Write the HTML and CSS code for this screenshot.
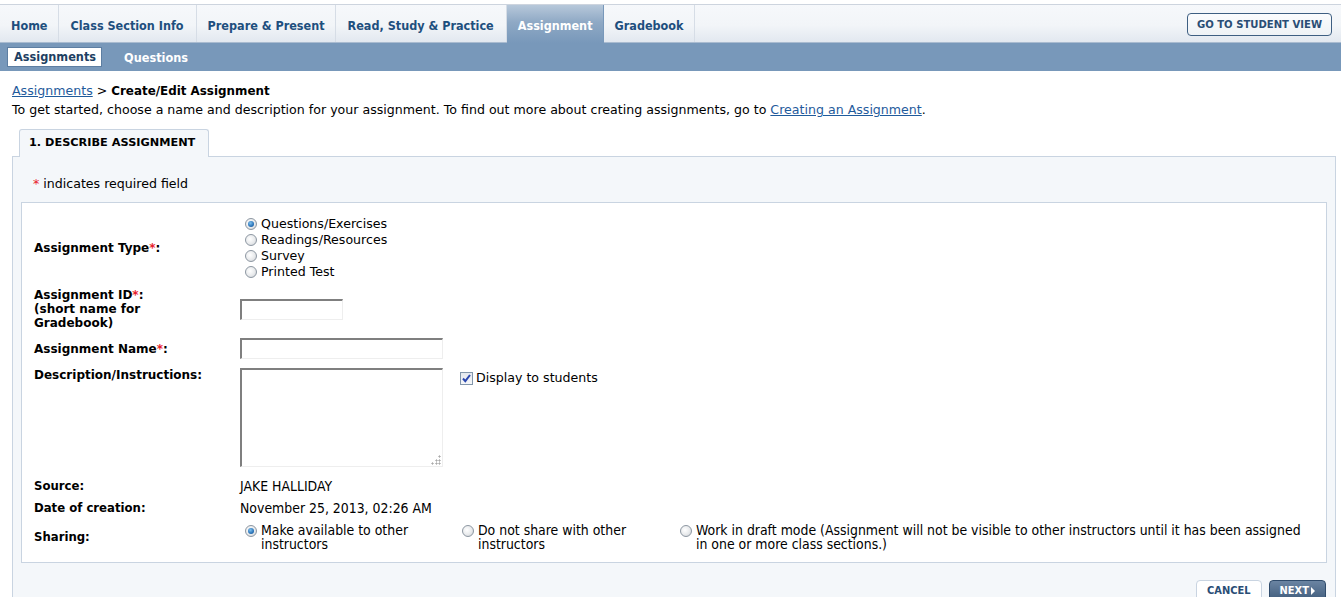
FILE: index.html
```html
<!DOCTYPE html>
<html>
<head>
<meta charset="utf-8">
<title>Create/Edit Assignment</title>
<link rel="stylesheet" href="styles.css">
</head>
<body>
<header class="topnav">
  <ul class="tabs">
    <li class="tab">Home</li>
    <li class="tab">Class Section Info</li>
    <li class="tab">Prepare &amp; Present</li>
    <li class="tab">Read, Study &amp; Practice</li>
    <li class="tab active">Assignment</li>
    <li class="tab">Gradebook</li>
  </ul>
  <button class="student-view">GO TO STUDENT VIEW</button>
</header>
<nav class="subnav">
  <span class="sub active">Assignments</span>
  <span class="sub">Questions</span>
</nav>
<main class="content">
  <div class="crumbs"><a href="#">Assignments</a> &gt; <b>Create/Edit Assignment</b></div>
  <p class="intro">To get started, choose a name and description for your assignment. To find out more about creating assignments, go to <a href="#">Creating an Assignment</a>.</p>
  <div class="steptab">1. DESCRIBE ASSIGNMENT</div>
  <section class="panel">
    <p class="req"><span class="star">*</span> indicates required field</p>
    <div class="formbox">
      <div class="row r-type">
        <div class="label">Assignment Type<span class="star">*</span>:</div>
        <div class="field radios">
          <label class="opt"><span class="radio on"></span>Questions/Exercises</label>
          <label class="opt"><span class="radio"></span>Readings/Resources</label>
          <label class="opt"><span class="radio"></span>Survey</label>
          <label class="opt"><span class="radio"></span>Printed Test</label>
        </div>
      </div>
      <div class="row r-id">
        <div class="label small">Assignment ID<span class="star">*</span>:<br>(short name for<br>Gradebook)</div>
        <div class="field"><span class="input short"></span></div>
      </div>
      <div class="row r-name">
        <div class="label">Assignment Name<span class="star">*</span>:</div>
        <div class="field"><span class="input long"></span></div>
      </div>
      <div class="row r-desc">
        <div class="label">Description/Instructions:</div>
        <div class="field desc">
          <span class="textarea"></span>
          <label class="check"><span class="checkbox"><svg width="11" height="11" viewBox="0 0 11 11"><path d="M2 5.5 L4.3 8.2 L9 2" fill="none" stroke="#2a46b0" stroke-width="2"/></svg></span>Display to students</label>
        </div>
      </div>
      <div class="row r-src">
        <div class="label cond">Source:</div>
        <div class="field cond">JAKE HALLIDAY</div>
      </div>
      <div class="row r-date">
        <div class="label cond">Date of creation:</div>
        <div class="field cond">November 25, 2013, 02:26 AM</div>
      </div>
      <div class="row r-share">
        <div class="label cond">Sharing:</div>
        <div class="field share cond">
          <label class="sopt s1"><span class="radio on"></span><span>Make available to other instructors</span></label>
          <label class="sopt s2"><span class="radio"></span><span>Do not share with other instructors</span></label>
          <label class="sopt s3"><span class="radio"></span><span>Work in draft mode (Assignment will not be visible to other instructors until it has been assigned in one or more class sections.)</span></label>
        </div>
      </div>
    </div>
    <div class="actions">
      <button class="btn cancel">CANCEL</button>
      <button class="btn next">NEXT<span class="tri"></span></button>
    </div>
  </section>
</main>
</body>
</html>
```

FILE: styles.css
```css
* { box-sizing: border-box; }
html, body { margin: 0; padding: 0; background: #fff; }
body {
  font-family: "DejaVu Sans", Verdana, sans-serif;
  font-size: 12.6px;
  color: #000;
}

/* top navigation */
.topnav {
  margin-top: 4px;
  height: 39px;
  border-top: 1px solid #cdd4de;
  border-bottom: 1px solid #a9bbd0;
  background: linear-gradient(#f6f8fb 0%, #f2f5f8 55%, #e2e8f0 100%);
  display: flex;
  justify-content: space-between;
  align-items: stretch;
}
.tabs { list-style: none; margin: 0; padding: 0; display: flex; }
.tab {
  font-family: "DejaVu Sans Condensed", Tahoma, sans-serif;
  font-weight: bold;
  font-size: 12.5px;
  color: #1e4f7e;
  display: flex;
  align-items: center;
  padding: 3px 10px 0 11px;
  border-right: 1px solid #d6dde6;
}
.tab:nth-child(2) { padding-left: 12px; padding-right: 12px; }
.tab:nth-child(4) { padding-left: 12px; padding-right: 12px; }
.tab.active {
  color: #fff;
  background: linear-gradient(#b7c8da 0%, #8fa9c5 45%, #7898ba 100%);
  border-right-color: #7898ba;
  margin-bottom: -1px;
}
.student-view {
  align-self: center;
  margin-right: 9px;
  margin-top: 1px;
  height: 23px;
  padding: 0 9px;
  border: 1px solid #3e5f82;
  border-radius: 4px;
  background: linear-gradient(#fbfcfd, #eef2f6);
  color: #2a4d75;
  font-family: "DejaVu Sans Condensed", Tahoma, sans-serif;
  font-weight: bold;
  font-size: 11.2px;
}

.subnav {
  height: 28px;
  background: #7898ba;
  display: flex;
  align-items: center;
  padding-left: 7px;
  gap: 22px;
}
.sub {
  font-family: "DejaVu Sans Condensed", Tahoma, sans-serif;
  font-weight: bold;
  font-size: 12.6px;
  color: #fff;
}
.sub.active {
  background: #fff;
  color: #1e3f63;
  border: 1px solid #5d7ea2;
  padding: 1px 5px 2px 6px;
}

/* content */
.content { padding: 12px 5px 0 12px; }
a { color: #1f5b9c; }
.crumbs { line-height: 16px; }
.crumbs b { font-size: 11.9px; }
.intro { margin: 3px 0 0; line-height: 16px; }
.steptab {
  margin: 11px 0 0 7px;
  width: 190px;
  height: 28px;
  border: 1px solid #c9d4e1;
  border-bottom: none;
  border-radius: 3px 3px 0 0;
  background: #f4f7fa;
  font-size: 11.3px;
  font-weight: bold;
  padding: 6px 0 0 9px;
  position: relative;
  z-index: 1;
  margin-bottom: -1px;
}
.panel {
  border: 1px solid #c9d4e1;
  background: #f4f7fa;
  padding: 19px 8px 0 8px;
}
.req { margin: 0 0 10px 12px; line-height: 16px; }
.star { color: #e8202a; }

.formbox {
  background: #fff;
  border: 1px solid #c9d4e1;
  padding: 13px 0 11px 12px;
}
.row { display: flex; align-items: center; }
.label {
  width: 206px;
  flex: none;
  font-weight: bold;
  font-size: 12px;
  line-height: 14px;
}
.label.cond {
  font-family: "DejaVu Sans Condensed", Tahoma, sans-serif;
  font-size: 13px;
}
.field.cond {
  font-family: "DejaVu Sans Condensed", Tahoma, sans-serif;
  font-size: 13.9px;
  font-weight: normal;
}
.field { flex: 1; }

.radios { padding-left: 5px; }
.opt { display: flex; align-items: center; line-height: 16px; }
.radio {
  width: 12px; height: 12px;
  border-radius: 50%;
  border: 1px solid #8d97a2;
  background: radial-gradient(circle at 40% 40%, #ffffff 0%, #e8eaec 55%, #c6cbd1 100%);
  margin-right: 4px;
  flex: none;
  position: relative;
}
.radio.on::after {
  content: "";
  position: absolute;
  left: 2px; top: 2px;
  width: 6px; height: 6px;
  border-radius: 50%;
  background: radial-gradient(circle at 40% 35%, #7ec0ee 0%, #2a73b8 60%, #1a4f88 100%);
}

.r-id { margin-top: 8px; }
.r-name { margin-top: 8px; }
.r-desc { margin-top: 9px; align-items: flex-start; }
.r-src { margin-top: 11px; }
.r-date { margin-top: 6px; }
.r-share { margin-top: 7px; }

.input {
  display: block;
  height: 21px;
  border-top: 2px solid #7f7f7f;
  border-left: 2px solid #7f7f7f;
  border-right: 1px solid #eeeeee;
  border-bottom: 1px solid #eeeeee;
  background: #fff;
}
.input.short { width: 103px; }
.input.long { width: 203px; }
.desc { display: flex; align-items: flex-start; }
.textarea {
  display: block;
  width: 203px;
  height: 99px;
  border-top: 2px solid #7f7f7f;
  border-left: 2px solid #7f7f7f;
  border-right: 1px solid #eeeeee;
  border-bottom: 1px solid #eeeeee;
  position: relative;
}
.textarea::after {
  content: "";
  position: absolute;
  right: 1px; bottom: 1px;
  width: 10px; height: 10px;
  background:
    radial-gradient(circle, #aaa 0.9px, transparent 1.2px) 7px 0 / 3px 3px no-repeat,
    radial-gradient(circle, #aaa 0.9px, transparent 1.2px) 7px 3.5px / 3px 3px no-repeat,
    radial-gradient(circle, #aaa 0.9px, transparent 1.2px) 3.5px 3.5px / 3px 3px no-repeat,
    radial-gradient(circle, #aaa 0.9px, transparent 1.2px) 7px 7px / 3px 3px no-repeat,
    radial-gradient(circle, #aaa 0.9px, transparent 1.2px) 3.5px 7px / 3px 3px no-repeat,
    radial-gradient(circle, #aaa 0.9px, transparent 1.2px) 0 7px / 3px 3px no-repeat;
}
.check {
  display: flex;
  align-items: center;
  margin-left: 17px;
  margin-top: 2px;
  line-height: 16px;
}
.checkbox {
  width: 13px; height: 13px;
  border: 1px solid #8296ab;
  background: linear-gradient(#e4e8ee, #f6f7f9);
  display: flex;
  align-items: center;
  justify-content: center;
  margin-right: 3px;
}

.share { display: flex; align-items: flex-start; }
.sopt { display: flex; align-items: flex-start; line-height: 14px; }
.sopt .radio { margin-top: 2px; }
.s1 { width: 217px; padding-left: 5px; padding-right: 20px; }
.s2 { width: 218px; padding-left: 5px; padding-right: 30px; }
.s3 { flex: 1; padding-left: 5px; padding-right: 14px; }

.actions {
  display: flex;
  justify-content: flex-end;
  gap: 7px;
  padding: 17px 9px 10px 0;
  margin-right: -8px;
}
.btn {
  height: 22px;
  border-radius: 4px;
  font-family: "DejaVu Sans Condensed", Tahoma, sans-serif;
  font-weight: bold;
  font-size: 11px;
  padding: 0 10px;
  line-height: 20px;
}
.cancel {
  background: #fff;
  border: 1px solid #c9d4e1;
  color: #2a4d75;
}
.next {
  background: linear-gradient(#6a84a2, #3f5b7b);
  border: 1px solid #2f4b6b;
  color: #fff;
  display: flex;
  align-items: center;
}
.tri {
  display: inline-block;
  margin-left: 2px;
  width: 0; height: 0;
  border-top: 4px solid transparent;
  border-bottom: 4px solid transparent;
  border-left: 4px solid #fff;
}
```
